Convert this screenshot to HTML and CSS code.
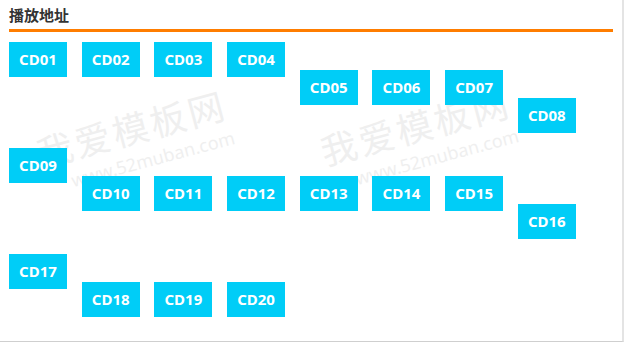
FILE: index.html
```html
<!DOCTYPE html>
<html lang="zh-CN">
<head>
    <meta charset="UTF-8">
    <title>播放地址</title>
    <link rel="stylesheet" href="styles.css">
</head>
<body>
    <div class="panel">
        <h2 class="panel-title">播放地址</h2>

        <div class="mark mark-left">
            <span class="mark-cn">我爱模板网</span>
            <span class="mark-url">www.52muban.com</span>
        </div>
        <div class="mark mark-right">
            <span class="mark-cn">我爱模板网</span>
            <span class="mark-url">www.52muban.com</span>
        </div>

        <ul class="play-list">
            <li><a class="play-btn" href="#">CD01</a></li>
            <li><a class="play-btn" href="#">CD02</a></li>
            <li><a class="play-btn" href="#">CD03</a></li>
            <li><a class="play-btn" href="#">CD04</a></li>
            <li class="step-1"><a class="play-btn" href="#">CD05</a></li>
            <li class="step-1"><a class="play-btn" href="#">CD06</a></li>
            <li class="step-1"><a class="play-btn" href="#">CD07</a></li>
            <li class="step-2"><a class="play-btn" href="#">CD08</a></li>

            <li><a class="play-btn" href="#">CD09</a></li>
            <li class="step-1"><a class="play-btn" href="#">CD10</a></li>
            <li class="step-1"><a class="play-btn" href="#">CD11</a></li>
            <li class="step-1"><a class="play-btn" href="#">CD12</a></li>
            <li class="step-1"><a class="play-btn" href="#">CD13</a></li>
            <li class="step-1"><a class="play-btn" href="#">CD14</a></li>
            <li class="step-1"><a class="play-btn" href="#">CD15</a></li>
            <li class="step-2"><a class="play-btn" href="#">CD16</a></li>

            <li><a class="play-btn" href="#">CD17</a></li>
            <li class="step-1"><a class="play-btn" href="#">CD18</a></li>
            <li class="step-1"><a class="play-btn" href="#">CD19</a></li>
            <li class="step-1"><a class="play-btn" href="#">CD20</a></li>
        </ul>
    </div>
</body>
</html>
```

FILE: styles.css
```css
*, *::before, *::after {
    box-sizing: border-box;
}

html, body {
    margin: 0;
    background: #fff;
}
body {
    font-family: "Noto Sans", "Noto Sans CJK SC", sans-serif;
}

.panel {
    position: relative;
    width: 624px;
    height: 342px;
    padding: 0 9px;
    border-right: 2px solid #e4e4e4;
    border-bottom: 1px solid #cfcfcf;
    overflow: hidden;
}
.panel-title {
    margin: 0;
    font-family: "Noto Sans CJK SC", sans-serif;
    font-size: 15px;
    font-weight: bold;
    line-height: 29px;
    color: #333;
    border-bottom: 3px solid #ff7d00;
}

/* watermark sits behind the buttons */
.mark {
    position: absolute;
    display: flex;
    flex-direction: column;
    transform: rotate(-15deg);
    transform-origin: 0 0;
    color: #efefef;
    white-space: nowrap;
    pointer-events: none;
}
.mark-left {
    left: 32px;
    top: 134px;
}
.mark-right {
    left: 316px;
    top: 132px;
}
.mark-cn {
    font-family: "Noto Sans CJK SC", sans-serif;
    font-size: 36px;
    line-height: 38px;
    letter-spacing: 3px;
}
.mark-url {
    margin-top: 6px;
    font-size: 18px;
    line-height: 22px;
    padding-left: 26px;
}

.play-list {
    position: relative;
    z-index: 1;
    display: grid;
    grid-template-columns: repeat(8, 58px);
    column-gap: 14.7px;
    row-gap: 15px;
    align-items: start;
    margin: 10px 0 0;
    padding: 0;
    list-style: none;
}
.play-list .step-1 {
    margin-top: 28px;
}
.play-list .step-2 {
    margin-top: 56px;
}
.play-btn {
    display: block;
    height: 35px;
    line-height: 35px;
    background: #00cdf7;
    color: #fff;
    font-size: 15px;
    font-weight: bold;
    text-align: center;
    text-decoration: none;
}
```
